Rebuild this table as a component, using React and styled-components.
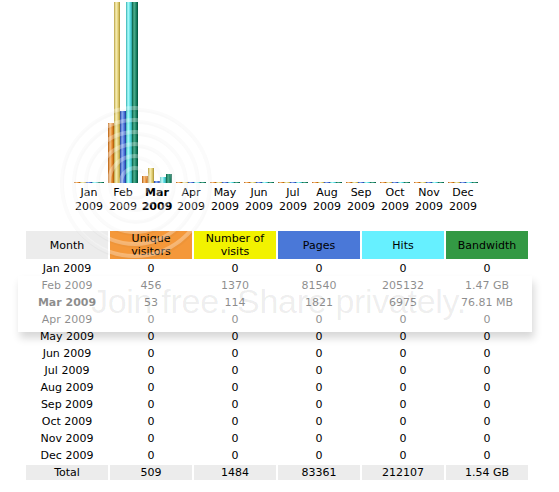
import React from "react";
import styled, { createGlobalStyle } from "styled-components";

const GlobalStyle = createGlobalStyle`
  html, body { margin: 0; padding: 0; background: #fff; }
  body { font-family: "DejaVu Sans", Verdana, sans-serif; font-size: 11px; color: #000; }
`;

const months = ["Jan","Feb","Mar","Apr","May","Jun","Jul","Aug","Sep","Oct","Nov","Dec"];
const data = months.map((m) => ({ m, u: 0, v: 0, p: 0, h: 0, bw: 0, bwText: "0" }));
Object.assign(data[1], { u: 456, v: 1370, p: 81540, h: 205132, bw: 1505.28, bwText: "1.47 GB" });
Object.assign(data[2], { u: 53, v: 114, p: 1821, h: 6975, bw: 76.81, bwText: "76.81 MB" });

const maxV = Math.max(...data.map((d) => d.v));
const maxH = Math.max(...data.map((d) => d.h));
const maxBw = Math.max(...data.map((d) => d.bw));
const H = 181;
const hgt = (val, max) => Math.max(1, Math.round((val / max) * H));

const barColors = {
  u: ["#b65a06", "#f7c58c", "#e88c2a", "#a85205"],
  v: ["#b8a040", "#f8f0b8", "#e0cc70", "#a89030"],
  p: ["#1c3c9c", "#90b0f4", "#4a74dc", "#1a3690"],
  h: ["#30b0b0", "#b0ffff", "#58dce0", "#2aa0a4"],
  k: ["#005c40", "#50b090", "#1a8464", "#00503a"],
};

const Page = styled.div`
  position: relative;
  width: 559px;
  height: 492px;
  overflow: hidden;
`;

const Chart = styled.div`
  display: flex;
  gap: 4px;
  padding: 2px 0 0 74px;
`;

const Group = styled.div`
  width: 30px;
  display: flex;
  flex-direction: column;
  align-items: center;
`;

const Bars = styled.div`
  height: ${H}px;
  display: flex;
  align-items: flex-end;
`;

const Bar = styled.div`
  width: 6px;
  background: linear-gradient(
    to right,
    ${(p) => p.$c[0]} 0%,
    ${(p) => p.$c[1]} 35%,
    ${(p) => p.$c[2]} 70%,
    ${(p) => p.$c[3]} 100%
  );
`;

const Label = styled.div`
  margin-top: 3px;
  text-align: center;
  line-height: 14px;
  white-space: nowrap;
  color: #000;
  font-weight: ${(p) => (p.$bold ? "bold" : "normal")};
`;

const Table = styled.table`
  margin: 15px 0 0 24px;
  border-spacing: 2px;
  table-layout: fixed;
  width: 506px;
`;

const Th = styled.th`
  width: 82px;
  height: 28px;
  padding: 0;
  font-weight: normal;
  line-height: 13px;
  color: #000;
  white-space: nowrap;
  background: ${(p) => p.$bg};
`;

const Td = styled.td`
  height: 15px;
  padding: 0;
  text-align: center;
  line-height: 15px;
  color: #000;
  white-space: nowrap;
  font-weight: ${(p) => (p.$bold ? "bold" : "normal")};
  background: ${(p) => (p.$total ? "#ececec" : "transparent")};
`;

const Band = styled.div`
  position: absolute;
  left: 18px;
  top: 276px;
  width: 514px;
  height: 56px;
  background: rgba(255, 255, 255, 0.55);
  box-shadow: 2px 6px 8px rgba(0, 0, 0, 0.16);
  pointer-events: none;
`;

const WaterText = styled.div`
  position: absolute;
  left: 0;
  right: 0;
  top: 280px;
  text-align: center;
  padding-right: 2px;
  font-family: "Liberation Sans", Arial, sans-serif;
  font-size: 34px;
  line-height: 42px;
  letter-spacing: -0.3px;
  color: rgba(0, 0, 0, 0.075);
  white-space: nowrap;
  pointer-events: none;
`;

const Rings = styled.svg`
  position: absolute;
  left: 40px;
  top: 90px;
  pointer-events: none;
`;

const headers = [
  [["Month"], "#ececec"],
  [["Unique", "visitors"], "#f4983a"],
  [["Number of", "visits"], "#f2f200"],
  [["Pages"], "#4a78d8"],
  [["Hits"], "#66f0ff"],
  [["Bandwidth"], "#339944"],
];

export default function App() {
  return (
    <Page>
      <GlobalStyle />
      <Chart>
        {data.map((d, i) => (
          <Group key={d.m}>
            <Bars>
              <Bar $c={barColors.u} style={{ height: hgt(d.u, maxV) }} />
              <Bar $c={barColors.v} style={{ height: hgt(d.v, maxV) }} />
              <Bar $c={barColors.p} style={{ height: hgt(d.p, maxH) }} />
              <Bar $c={barColors.h} style={{ height: hgt(d.h, maxH) }} />
              <Bar $c={barColors.k} style={{ height: hgt(d.bw, maxBw) }} />
            </Bars>
            <Label $bold={i === 2}>
              {d.m}
              <br />
              2009
            </Label>
          </Group>
        ))}
      </Chart>
      <Table>
        <thead>
          <tr>
            {headers.map(([lines, bg]) => (
              <Th key={lines[0]} $bg={bg}>
                {lines.map((l, k) => (
                  <React.Fragment key={l}>
                    {k > 0 && <br />}
                    {l}
                  </React.Fragment>
                ))}
              </Th>
            ))}
          </tr>
        </thead>
        <tbody>
          {data.map((d, i) => (
            <tr key={d.m}>
              <Td $bold={i === 2}>{d.m} 2009</Td>
              <Td>{d.u}</Td>
              <Td>{d.v}</Td>
              <Td>{d.p}</Td>
              <Td>{d.h}</Td>
              <Td>{d.bwText}</Td>
            </tr>
          ))}
          <tr>
            <Td $total>Total</Td>
            <Td $total>509</Td>
            <Td $total>1484</Td>
            <Td $total>83361</Td>
            <Td $total>212107</Td>
            <Td $total>1.54 GB</Td>
          </tr>
        </tbody>
      </Table>
      <Rings width="200" height="180" viewBox="0 0 200 180">
        {[14, 26, 38, 50, 62, 74].map((r) => (
          <g key={r}>
            <circle cx="95" cy="92" r={r} fill="none" stroke="rgba(0,0,0,0.022)" strokeWidth="4" transform="translate(1,2)" />
            <circle cx="95" cy="92" r={r} fill="none" stroke="rgba(255,255,255,0.3)" strokeWidth="4" />
          </g>
        ))}
      </Rings>
      <Band />
      <WaterText>Join free. Share privately.</WaterText>
    </Page>
  );
}
